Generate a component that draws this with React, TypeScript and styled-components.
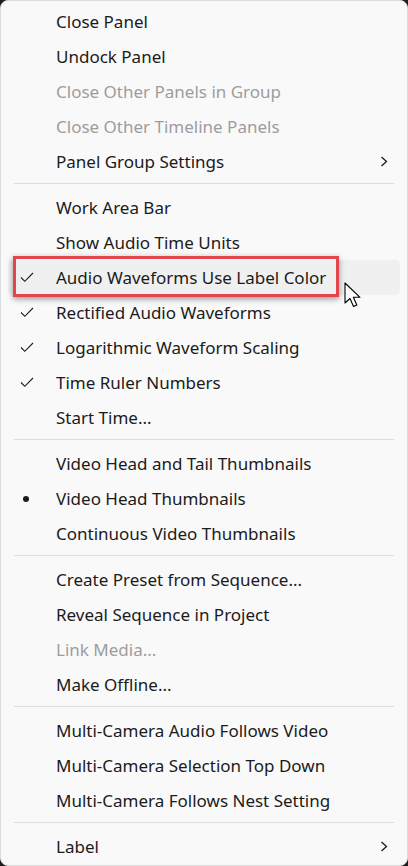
import React from "react";
import styled, { createGlobalStyle } from "styled-components";

type Mark = "check" | "dot" | undefined;

interface ItemType {
  label: string;
  disabled?: boolean;
  mark?: Mark;
  submenu?: boolean;
  hovered?: boolean;
}

const sections: ItemType[][] = [
  [
    { label: "Close Panel" },
    { label: "Undock Panel" },
    { label: "Close Other Panels in Group", disabled: true },
    { label: "Close Other Timeline Panels", disabled: true },
    { label: "Panel Group Settings", submenu: true },
  ],
  [
    { label: "Work Area Bar" },
    { label: "Show Audio Time Units" },
    { label: "Audio Waveforms Use Label Color", mark: "check", hovered: true },
    { label: "Rectified Audio Waveforms", mark: "check" },
    { label: "Logarithmic Waveform Scaling", mark: "check" },
    { label: "Time Ruler Numbers", mark: "check" },
    { label: "Start Time..." },
  ],
  [
    { label: "Video Head and Tail Thumbnails" },
    { label: "Video Head Thumbnails", mark: "dot" },
    { label: "Continuous Video Thumbnails" },
  ],
  [
    { label: "Create Preset from Sequence..." },
    { label: "Reveal Sequence in Project" },
    { label: "Link Media...", disabled: true },
    { label: "Make Offline..." },
  ],
  [
    { label: "Multi-Camera Audio Follows Video" },
    { label: "Multi-Camera Selection Top Down" },
    { label: "Multi-Camera Follows Nest Setting" },
  ],
  [{ label: "Label", submenu: true }],
];

const CheckIcon = () => (
  <svg width="14" height="11" viewBox="0 0 14 11" fill="none">
    <path d="M1 5.5 L4.8 9.3 L13 1" stroke="#1b1b1b" strokeWidth="1.1" />
  </svg>
);

const ChevronIcon = () => (
  <svg width="8" height="11" viewBox="0 0 8 11" fill="none">
    <path d="M1.5 1 L6.5 5.5 L1.5 10" stroke="#1b1b1b" strokeWidth="1.3" />
  </svg>
);

const Cursor = () => (
  <svg width="20" height="28" viewBox="0 0 20 28">
    <path
      d="M1 1 L1 21 L6 16.5 L9.5 24.5 L12.8 23 L9.4 15.3 L16 15.3 Z"
      fill="#fff"
      stroke="#000"
      strokeWidth="1.1"
      strokeLinejoin="round"
    />
  </svg>
);

export default function App() {
  return (
    <>
      <GlobalStyle />
      <Menu>
        {sections.map((section, si) => (
          <React.Fragment key={si}>
            {si > 0 && <Separator />}
            {section.map((item) => (
              <Row key={item.label} $hovered={item.hovered}>
                <MarkCell>
                  {item.mark === "check" && <CheckIcon />}
                  {item.mark === "dot" && <Dot />}
                </MarkCell>
                <Label $disabled={item.disabled}>{item.label}</Label>
                {item.submenu && (
                  <Arrow>
                    <ChevronIcon />
                  </Arrow>
                )}
                {item.hovered && (
                  <>
                    <Highlight />
                    <Pointer>
                      <Cursor />
                    </Pointer>
                  </>
                )}
              </Row>
            ))}
          </React.Fragment>
        ))}
      </Menu>
    </>
  );
}

const GlobalStyle = createGlobalStyle`
  html, body {
    margin: 0;
    padding: 0;
    background: #1e1e1e;
  }
  body {
    font-family: "Noto Sans", "Open Sans", sans-serif;
  }
`;

const Menu = styled.div`
  box-sizing: border-box;
  width: 408px;
  height: 866px;
  padding: 3px 0;
  background: #f9f9f9;
  border: 1px solid #dcdcdc;
  border-radius: 8px;
  overflow: hidden;
`;

const Separator = styled.div`
  height: 1px;
  margin: 4px 13px 6px;
  background: #dedede;
`;

const Row = styled.div<{ $hovered?: boolean }>`
  position: relative;
  display: flex;
  align-items: center;
  height: 35px;
  margin: 0 7px;
  padding: 0 12px 0 0;
  border-radius: 5px;
  background: ${({ $hovered }) => ($hovered ? "#f0f0f0" : "transparent")};
`;

const MarkCell = styled.div`
  width: 48px;
  flex: none;
  display: flex;
  align-items: center;
  padding-left: 12px;
  box-sizing: border-box;
`;

const Dot = styled.span`
  display: block;
  width: 6px;
  height: 6px;
  margin-left: 3px;
  border-radius: 50%;
  background: #1b1b1b;
`;

const Label = styled.span<{ $disabled?: boolean }>`
  flex: 1;
  font-size: 17px;
  color: ${({ $disabled }) => ($disabled ? "#9d9d9d" : "#1b1b1b")};
  white-space: nowrap;
`;

const Arrow = styled.span`
  display: flex;
  align-items: center;
`;

const Highlight = styled.div`
  position: absolute;
  left: 5px;
  top: -4px;
  width: 326px;
  height: 41px;
  box-sizing: border-box;
  border: 3px solid #e4454a;
  box-shadow: 0 2px 6px rgba(0, 0, 0, 0.4);
  pointer-events: none;
`;

const Pointer = styled.div`
  position: absolute;
  left: 336px;
  top: 22px;
  line-height: 0;
`;
